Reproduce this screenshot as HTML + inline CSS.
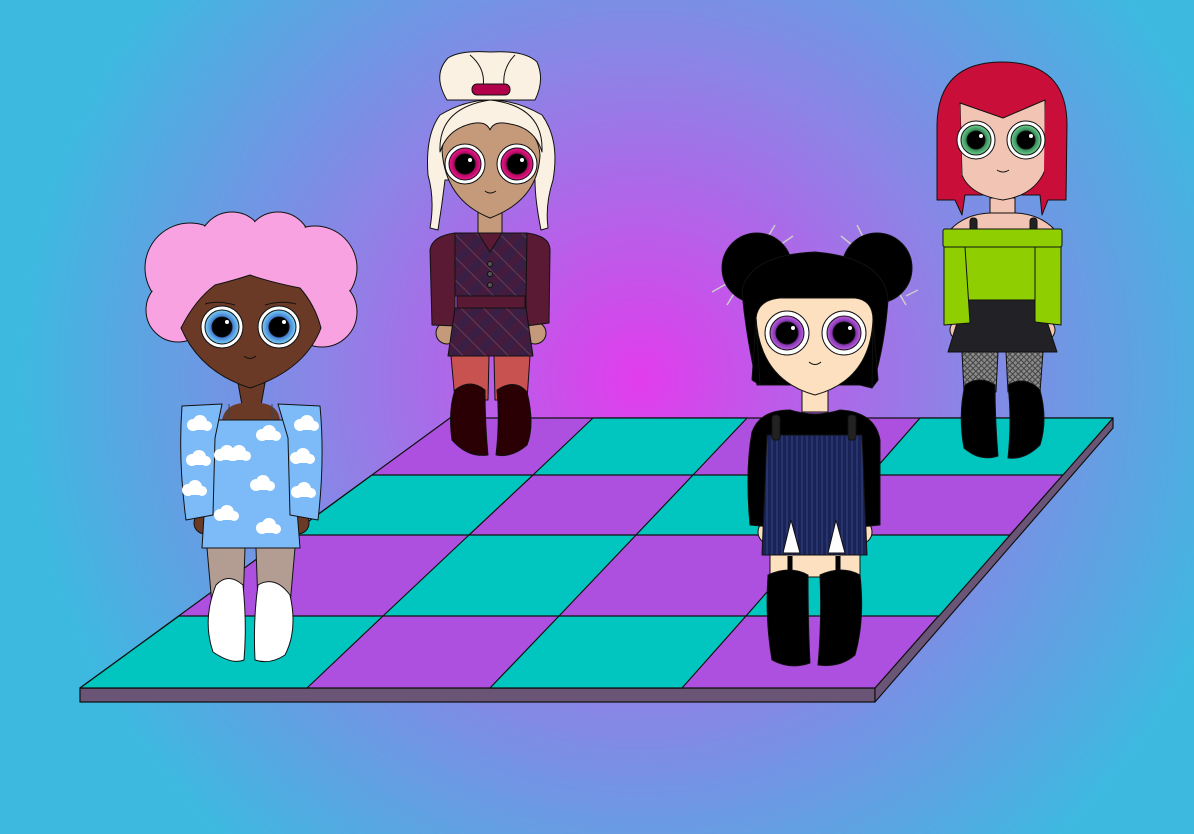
<!DOCTYPE html>
<html><head><style>html,body{margin:0;padding:0;width:1194px;height:834px;overflow:hidden}</style></head>
<body>
<svg width="1194" height="834" viewBox="0 0 1194 834" xmlns="http://www.w3.org/2000/svg" stroke-linejoin="round">
<defs>
<radialGradient id="bg" cx="640" cy="380" r="620" gradientUnits="userSpaceOnUse">
<stop offset="0" stop-color="#e23cec"/><stop offset="0.5" stop-color="#8e82e6"/><stop offset="1" stop-color="#3db9e0"/>
</radialGradient>
<radialGradient id="eb" cx="0.5" cy="0.5" r="0.5"><stop offset="0.5" stop-color="#2f5fc8"/><stop offset="1" stop-color="#7ad0f4"/></radialGradient>
<radialGradient id="em" cx="0.5" cy="0.5" r="0.5"><stop offset="0.5" stop-color="#8a0040"/><stop offset="1" stop-color="#f01890"/></radialGradient>
<radialGradient id="ep" cx="0.5" cy="0.5" r="0.5"><stop offset="0.5" stop-color="#5a1890"/><stop offset="1" stop-color="#c060e0"/></radialGradient>
<radialGradient id="eg" cx="0.5" cy="0.5" r="0.5"><stop offset="0.5" stop-color="#1a6a40"/><stop offset="1" stop-color="#70d090"/></radialGradient>
<pattern id="plaid" width="16" height="16" patternUnits="userSpaceOnUse" patternTransform="rotate(45)">
<rect width="16" height="16" fill="#3a1f44"/><rect width="8" height="16" fill="#4a1a3c" opacity=".7"/><line x1="0" y1="4" x2="16" y2="4" stroke="#6a3a50" stroke-width="1"/>
</pattern>
<pattern id="stripe" width="5" height="10" patternUnits="userSpaceOnUse">
<rect width="5" height="10" fill="#1a2358"/><line x1="2" y1="0" x2="2" y2="10" stroke="#4a5a9a" stroke-width=".6"/>
</pattern>
<pattern id="net" width="4" height="4" patternUnits="userSpaceOnUse" patternTransform="rotate(45)">
<rect width="4" height="4" fill="#8a8a8a"/><rect width="4" height="1" fill="#444"/><rect width="1" height="4" fill="#444"/>
</pattern>
<g id="cloud"><circle cx="0" cy="0" r="6" fill="#fff"/><circle cx="7" cy="-3" r="7" fill="#fff"/><circle cx="14" cy="1" r="5" fill="#fff"/><rect x="-4" y="0" width="20" height="5" rx="3" fill="#fff"/></g>
</defs>
<rect width="1194" height="834" fill="url(#bg)"/>

<g stroke="#111" stroke-width="1.2">
<polygon points="80,688 875,688 875,702 80,702" fill="#6a5577"/>
<polygon points="875,688 1113,418 1113,428 875,702" fill="#6a5577"/>
<polygon points="450,418 1113,418 875,688 80,688" fill="#ad50df"/>
<polygon points="593,418 747,418 693,475 533,475" fill="#00c6bf"/>
<polygon points="920,418 1113,418 1063,475 870,475" fill="#00c6bf"/>
<polygon points="372,475 533,475 469,535 290,535" fill="#00c6bf"/>
<polygon points="693,475 870,475 817,535 636,535" fill="#00c6bf"/>
<polygon points="469,535 636,535 559,616 383,616" fill="#00c6bf"/>
<polygon points="817,535 1010,535 939,616 746,616" fill="#00c6bf"/>
<polygon points="179,616 383,616 307,688 80,688" fill="#00c6bf"/>
<polygon points="559,616 746,616 682,688 490,688" fill="#00c6bf"/>
</g>

<g stroke="#111" stroke-width="1">
<!-- Character 1 -->
<g fill="#f9a2e2">
<circle cx="190" cy="268" r="45"/><circle cx="232" cy="245" r="33"/><circle cx="278" cy="245" r="33"/><circle cx="315" cy="268" r="42"/>
<circle cx="178" cy="310" r="32"/><circle cx="322" cy="312" r="35"/>
</g>
<g fill="#f9a2e2" stroke="none"><circle cx="190" cy="268" r="44"/><circle cx="232" cy="245" r="32"/><circle cx="278" cy="245" r="32"/><circle cx="315" cy="268" r="41"/><circle cx="178" cy="310" r="31"/><circle cx="322" cy="312" r="34"/><rect x="180" y="250" width="140" height="70"/></g>
<path d="M238,383 L242,405 L261,405 L265,383Z" fill="#6b3a26"/>
<path d="M181,328 Q195,300 215,285 Q235,280 250,275 Q270,282 300,288 Q315,305 321,328 Q305,370 250,388 Q200,372 181,328Z" fill="#6b3a26"/>
<path d="M205,304 Q218,300 235,305 M265,305 Q282,300 296,304" fill="none"/>
<g><circle cx="222" cy="327" r="21" fill="#fff"/><circle cx="222" cy="327" r="17" fill="url(#eb)"/><circle cx="222" cy="327" r="10" fill="#000"/><circle cx="227" cy="322" r="2" fill="#fff" stroke="none"/>
<circle cx="279" cy="327" r="21" fill="#fff"/><circle cx="279" cy="327" r="17" fill="url(#eb)"/><circle cx="279" cy="327" r="10" fill="#000"/><circle cx="284" cy="322" r="2" fill="#fff" stroke="none"/></g>
<path d="M244,356 Q250,361 256,356" fill="none"/>
<path d="M222,420 Q225,405 242,403 L261,403 Q278,405 280,420Z" fill="#6b3a26" stroke="none"/>
<circle cx="205" cy="523" r="11" fill="#6b3a26"/><circle cx="298" cy="523" r="11" fill="#6b3a26"/>
<path d="M207,548 L245,548 L243,605 L212,605Z M256,548 L295,548 L290,605 L258,605Z" fill="#b39d92"/>
<path d="M210,420 L290,420 L300,548 L202,548Z" fill="#7cbaf8"/>
<path d="M182,406 L222,404 L215,438 L213,515 L186,520 Q178,460 182,406Z" fill="#7cbaf8"/>
<path d="M278,404 L320,406 Q325,460 318,520 L290,515 L288,438Z" fill="#7cbaf8"/>
<line x1="229" y1="404" x2="229" y2="420" stroke="#345"/><line x1="272" y1="404" x2="272" y2="420" stroke="#345"/>
<g stroke="none"><use href="#cloud" x="193" y="425"/><use href="#cloud" x="300" y="425"/><use href="#cloud" x="220" y="455"/><use href="#cloud" x="232" y="455"/><use href="#cloud" x="262" y="435"/><use href="#cloud" x="192" y="460"/><use href="#cloud" x="296" y="458"/><use href="#cloud" x="256" y="485"/><use href="#cloud" x="188" y="490"/><use href="#cloud" x="297" y="492"/><use href="#cloud" x="220" y="515"/><use href="#cloud" x="262" y="528"/></g>
<path d="M216,585 Q228,572 243,585 Q247,625 244,660 Q232,665 213,652 Q202,620 216,585Z" fill="#fff"/>
<path d="M258,585 Q275,575 290,595 Q298,630 285,655 Q270,665 255,660 Q253,620 258,585Z" fill="#fff"/>

<!-- Character 2 -->
<path d="M447,100 Q432,75 448,58 Q460,50 490,52 Q525,50 537,62 Q545,80 535,100Z" fill="#fbf1e2"/>
<path d="M470,55 Q488,70 482,92 M515,55 Q500,70 505,92" fill="none"/>
<rect x="472" y="84" width="38" height="11" rx="5" fill="#b0004a"/>
<path d="M440,115 Q490,85 542,115 Q560,140 553,180 Q545,205 548,228 L541,230 Q535,200 535,180 L445,180 Q442,205 438,230 L430,228 Q435,200 428,175 Q425,135 440,115Z" fill="#fbf1e2"/>
<path d="M478,212 L478,235 L502,235 L502,212Z" fill="#c49a7a"/>
<path d="M442,150 Q445,125 470,120 Q490,117 510,120 Q538,128 540,155 Q538,200 490,218 Q445,200 442,150Z" fill="#c49a7a"/>
<path d="M440,152 Q438,108 490,100 Q544,106 542,152 Q535,128 510,124 Q494,120 490,130 Q486,120 470,124 Q447,130 440,152Z" fill="#fbf1e2"/>
<g><circle cx="465" cy="164" r="20" fill="#fff"/><circle cx="465" cy="164" r="16" fill="url(#em)"/><circle cx="465" cy="164" r="10" fill="#000"/><circle cx="470" cy="160" r="2" fill="#fff" stroke="none"/>
<circle cx="517" cy="164" r="20" fill="#fff"/><circle cx="517" cy="164" r="16" fill="url(#em)"/><circle cx="517" cy="164" r="10" fill="#000"/><circle cx="522" cy="160" r="2" fill="#fff" stroke="none"/></g>
<path d="M485,191 Q490,195 496,191" fill="none"/>
<circle cx="447" cy="333" r="11" fill="#c49a7a"/><circle cx="535" cy="333" r="11" fill="#c49a7a"/>
<path d="M430,250 Q432,236 455,233 L527,233 Q550,236 550,250 L549,323 L526,326 L526,296 L455,296 L455,326 L432,325Z" fill="#5a1a33"/>
<path d="M455,233 L478,233 L490,252 L502,233 L527,233 L526,296 L455,296Z" fill="url(#plaid)"/>
<circle cx="490" cy="264" r="2.5" fill="#555"/><circle cx="490" cy="274" r="2.5" fill="#555"/><circle cx="490" cy="285" r="2.5" fill="#555"/>
<rect x="457" y="296" width="68" height="12" fill="#5a1a33"/>
<path d="M455,308 L526,308 L533,356 L448,356Z" fill="url(#plaid)"/>
<path d="M451,356 L489,356 L488,400 L455,400Z M494,356 L530,356 L527,400 L495,400Z" fill="#c85250"/>
<path d="M455,390 Q470,378 485,390 Q485,425 488,455 Q468,458 452,440 Q448,410 455,390Z" fill="#2a0004"/>
<path d="M497,390 Q515,378 527,392 Q535,425 527,445 Q512,458 496,455 Q500,420 497,390Z" fill="#2a0004"/>

<!-- Character 3 -->
<g stroke="#ccc" stroke-width="1.5"><line x1="766" y1="240" x2="775" y2="225"/><line x1="780" y1="245" x2="793" y2="236"/><line x1="712" y1="292" x2="728" y2="283"/><line x1="727" y1="305" x2="735" y2="292"/>
<line x1="864" y1="239" x2="857" y2="225"/><line x1="852" y1="245" x2="841" y2="236"/><line x1="906" y1="296" x2="918" y2="290"/><line x1="896" y1="288" x2="906" y2="305"/></g>
<circle cx="757" cy="268" r="35" fill="#000"/><circle cx="877" cy="268" r="35" fill="#000"/>
<path d="M742,290 Q750,255 815,252 Q885,258 888,300 Q885,345 872,388 L860,385 L760,385 L757,385 Q745,330 742,290Z" fill="#000"/>
<path d="M802,390 L802,412 L828,412 L828,390Z" fill="#fde0c0"/>
<path d="M756,318 Q758,300 780,298 L855,298 Q873,300 873,320 Q870,380 815,395 Q760,380 756,318Z" fill="#fde0c0"/>
<path d="M756,318 L752,380 L760,385 Z M873,320 L878,380 L872,388Z" fill="#000"/>
<g><circle cx="787" cy="333" r="22" fill="#fff"/><circle cx="787" cy="333" r="17" fill="url(#ep)"/><circle cx="787" cy="333" r="11" fill="#000"/><circle cx="793" cy="328" r="2" fill="#fff" stroke="none"/>
<circle cx="844" cy="333" r="22" fill="#fff"/><circle cx="844" cy="333" r="17" fill="url(#ep)"/><circle cx="844" cy="333" r="11" fill="#000"/><circle cx="850" cy="328" r="2" fill="#fff" stroke="none"/></g>
<path d="M809,362 Q815,367 821,362" fill="none"/>
<circle cx="770" cy="532" r="12" fill="#fde0c0"/><circle cx="860" cy="532" r="12" fill="#fde0c0"/>
<path d="M770,555 L860,555 L860,577 L770,577Z" fill="#fde0c0"/>
<path d="M752,432 Q760,410 790,410 Q815,418 840,410 Q875,412 880,440 L880,525 L850,528 L808,528 L780,528 L750,525 Q745,470 752,432Z" fill="#000"/>
<path d="M767,435 L862,435 L867,555 L762,555Z" fill="url(#stripe)"/>
<path d="M783,553 L791,520 L800,553Z M828,553 L836,520 L845,553Z" fill="#fff"/>
<rect x="772" y="415" width="8" height="25" rx="3" fill="#222"/><rect x="848" y="415" width="8" height="25" rx="3" fill="#222"/>
<path d="M768,575 Q790,565 808,575 Q808,625 810,663 Q790,670 772,660 Q765,620 768,575Z" fill="#000"/>
<path d="M820,575 Q842,565 860,575 Q865,620 855,655 Q840,668 818,665 Q822,620 820,575Z" fill="#000"/>
<line x1="790" y1="556" x2="790" y2="575" stroke="#000" stroke-width="5"/><line x1="838" y1="556" x2="838" y2="575" stroke="#000" stroke-width="5"/>

<!-- Character 4 -->
<path d="M937,125 Q938,62 1002,62 Q1067,62 1067,125 L1066,200 L1048,200 L1042,215 L1040,195 L965,195 L962,215 L955,200 L937,200Z" fill="#c90e3a"/>
<path d="M990,198 L990,215 L1015,215 L1015,198Z" fill="#f2c4b4"/>
<path d="M960,103 L1003,118 L1045,100 L1045,170 Q1035,195 1003,200 Q970,195 962,175Z" fill="#f2c4b4"/>
<path d="M960,103 L962,175 L957,190 L952,150Z M1045,100 L1044,170 L1050,190Z" fill="#c90e3a" stroke="none"/>
<g><circle cx="976" cy="140" r="19" fill="#fff"/><circle cx="976" cy="140" r="15" fill="url(#eg)"/><circle cx="976" cy="140" r="9" fill="#000"/><circle cx="981" cy="136" r="2" fill="#fff" stroke="none"/>
<circle cx="1026" cy="140" r="19" fill="#fff"/><circle cx="1026" cy="140" r="15" fill="url(#eg)"/><circle cx="1026" cy="140" r="9" fill="#000"/><circle cx="1031" cy="136" r="2" fill="#fff" stroke="none"/></g>
<path d="M997,170 Q1003,174 1009,170" fill="none"/>
<path d="M950,230 Q965,214 990,213 L1015,213 Q1040,214 1055,230Z" fill="#f2c4b4"/>
<rect x="970" y="218" width="7" height="14" rx="3" fill="#222"/><rect x="1030" y="218" width="7" height="14" rx="3" fill="#222"/>
<circle cx="960" cy="330" r="10" fill="#f2c4b4"/><circle cx="1045" cy="330" r="10" fill="#f2c4b4"/>
<path d="M962,352 L998,352 L996,392 L964,392Z M1006,352 L1043,352 L1040,392 L1008,392Z" fill="url(#net)"/>
<path d="M964,300 L1040,300 L1057,352 L948,352Z" fill="#222226"/>
<path d="M964,247 L1040,247 L1040,300 L964,300Z" fill="#8fce00"/>
<path d="M944,247 L965,247 L970,323 L944,325Z M1035,247 L1061,247 L1061,325 L1035,322Z" fill="#8fce00"/>
<rect x="943" y="229" width="119" height="18" rx="2" fill="#8fce00"/>
<path d="M965,385 Q980,375 995,385 Q995,420 998,456 Q980,462 964,448 Q958,415 965,385Z" fill="#000"/>
<path d="M1008,385 Q1025,375 1040,390 Q1048,420 1040,445 Q1025,460 1008,458 Q1012,420 1008,385Z" fill="#000"/>
</g>
</svg>
</body></html>
